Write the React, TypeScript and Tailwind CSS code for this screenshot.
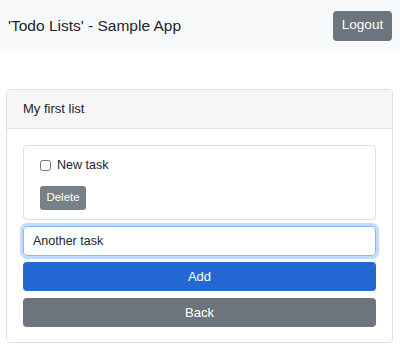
import { useState } from 'react';

export default function App() {
    const [task, setTask] = useState('Another task');

    return (
        <div className="w-[400px] h-[351px] bg-white text-[#212529] font-['Liberation_Sans',Arial,sans-serif]">
            {/* Navbar */}
            <nav className="h-[51px] bg-[#f8f9fa] flex items-center justify-between pl-2 pr-2">
                <div className="text-[15.5px]">'Todo Lists' - Sample App</div>
                <button className="h-[30px] w-[59px] rounded-[4px] bg-[#6c757d] text-white text-[13.5px]">Logout</button>
            </nav>

            {/* Card */}
            <div className="mt-[38px] ml-[6px] w-[387px] border border-[#dfdfdf] rounded-[4px]">
                <div className="h-[39px] flex items-center px-4 bg-[#f7f7f7] border-b border-[#dfdfdf] text-[13px]">
                    My first list
                </div>
                <div className="px-4 pt-4 pb-[15px] flex flex-col">
                    <div className="h-[75px] border border-[#dfdfdf] rounded-[4px] px-4 pt-[11px]">
                        <label className="flex items-center gap-[6px] text-[12.5px] h-[16px]">
                            <input type="checkbox" className="w-[11px] h-[11px] m-0" />
                            New task
                        </label>
                        <button className="mt-[13px] h-[24px] w-[46px] rounded-[3px] bg-[#787f86] text-white text-[11.5px]">
                            Delete
                        </button>
                    </div>
                    <input
                        value={task}
                        onChange={(e) => setTask(e.target.value)}
                        className="mt-[6px] h-[30px] px-[9px] text-[12.5px] border border-[#86b7fe] rounded-[4px] shadow-[0_0_0_3px_rgba(13,110,253,0.25)] outline-none"
                    />
                    <button className="mt-[6px] h-[29px] rounded-[4px] bg-[#2468d3] text-white text-[13px]">Add</button>
                    <button className="mt-[7px] h-[29px] rounded-[4px] bg-[#6c757d] text-white text-[13px]">Back</button>
                </div>
            </div>
        </div>
    );
}
